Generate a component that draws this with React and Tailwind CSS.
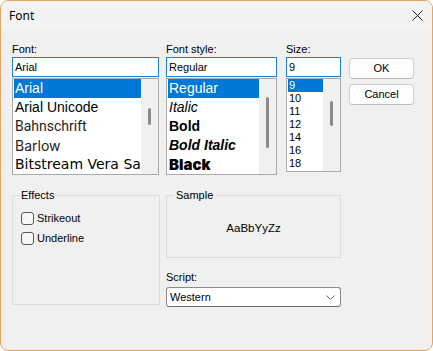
import React from "react";

const fonts = [
  { name: "Arial", cls: "font-['Liberation_Sans',sans-serif]", selected: true },
  { name: "Arial Unicode", cls: "font-['Liberation_Sans',sans-serif]" },
  { name: "Bahnschrift", cls: "font-['Roboto',sans-serif] text-[#222]" },
  { name: "Barlow", cls: "font-['Inter',sans-serif] text-[#222]" },
  { name: "Bitstream Vera Sans", cls: "font-['DejaVu_Sans',sans-serif]" },
];

const styles = [
  { name: "Regular", cls: "", selected: true },
  { name: "Italic", cls: "italic" },
  { name: "Bold", cls: "font-bold" },
  { name: "Bold Italic", cls: "font-bold italic" },
  { name: "Black", cls: "font-['Inter',sans-serif] font-black text-[15px]" },
];

const sizes = ["9", "10", "11", "12", "14", "16", "18"];

function ListBox({ className, thumb, children }) {
  return (
    <div className={`flex border border-[#ababab] bg-white pl-[1px] ${className}`}>
      <div className="flex-1 overflow-hidden">{children}</div>
      <div className="w-[17px] bg-[#f0f0f0] flex justify-center">
        <div className={`w-[3px] rounded-full bg-[#8a8a8a] ${thumb}`} />
      </div>
    </div>
  );
}

function TextBox({ value }) {
  return (
    <div className="h-[20px] border border-[#1e7fd6] bg-white pl-[2px] flex items-center leading-none">
      {value}
    </div>
  );
}

function Label({ children }) {
  return <div className="h-[15px] leading-[15px]">{children}</div>;
}

function CheckRow({ label }) {
  return (
    <div className="flex items-center h-[13px] gap-[3px]">
      <span className="w-[13px] h-[13px] rounded-[3px] border border-[#5a5a5a] bg-[#f6f6f6]" />
      <span className="leading-[13px]">{label}</span>
    </div>
  );
}

export default function App() {
  return (
    <div className="w-[433px] h-[351px] bg-white font-['Liberation_Sans',Arial,sans-serif] text-[11px] text-black">
      <div className="w-full h-full rounded-[8px] border border-[#e3a562] bg-[#f0f0f0] overflow-hidden flex flex-col">
        {/* title bar */}
        <div className="h-[29px] bg-[#f3f3f3] flex items-center justify-between pl-[8px] pr-[9px]">
          <span className="font-['Noto_Sans',sans-serif] text-[12px]">Font</span>
          <svg width="11" height="11" viewBox="0 0 11 11">
            <path d="M0.5 0.5 L10.5 10.5 M10.5 0.5 L0.5 10.5" stroke="#1a1a1a" strokeWidth="1" />
          </svg>
        </div>

        <div className="pl-[11px] pt-[12px]">
          <div className="flex">
            <div className="w-[147px]">
              <Label>Font:</Label>
              <TextBox value="Arial" />
              <ListBox className="mt-[1px] h-[97px]" thumb="mt-[29px] h-[17px]">
                {fonts.map((f) => (
                  <div
                    key={f.name}
                    className={`h-[19px] leading-[19px] pl-[1px] text-[14px] whitespace-nowrap ${f.cls} ${f.selected ? "bg-[#0078d7] text-white" : ""}`}
                  >
                    {f.name}
                  </div>
                ))}
              </ListBox>
            </div>

            <div className="w-[111px] ml-[7px]">
              <Label>Font style:</Label>
              <TextBox value="Regular" />
              <ListBox className="mt-[1px] h-[97px]" thumb="mt-[18px] h-[51px]">
                {styles.map((s) => (
                  <div
                    key={s.name}
                    className={`h-[19px] leading-[19px] pl-[1px] text-[14px] whitespace-nowrap ${s.cls} ${s.selected ? "bg-[#0078d7] text-white" : ""}`}
                  >
                    {s.name}
                  </div>
                ))}
              </ListBox>
            </div>

            <div className="w-[55px] ml-[9px]">
              <Label>Size:</Label>
              <TextBox value="9" />
              <ListBox className="mt-[1px] h-[94px]" thumb="mt-[22px] h-[25px]">
                {sizes.map((s, i) => (
                  <div
                    key={s}
                    className={`h-[13px] leading-[13px] pl-[1px] ${i === 0 ? "bg-[#0078d7] text-white" : ""}`}
                  >
                    {s}
                  </div>
                ))}
              </ListBox>
            </div>

            <div className="w-[65px] ml-[8px] pt-[16px] flex flex-col gap-[5px]">
              <button className="h-[21px] rounded-[4px] border border-[#d0d0d0] border-b-[#bcbcbc] bg-[#fdfdfd]">OK</button>
              <button className="h-[21px] rounded-[4px] border border-[#d0d0d0] border-b-[#bcbcbc] bg-[#fdfdfd]">Cancel</button>
            </div>
          </div>

          <div className="flex mt-[13px]">
            <fieldset className="w-[148px] h-[117px] border border-[#dcdcdc]">
              <legend className="ml-[7px] px-[1px] leading-[14px]">Effects</legend>
              <div className="pl-[8px] pt-[10px] flex flex-col gap-[7px]">
                <CheckRow label="Strikeout" />
                <CheckRow label="Underline" />
              </div>
            </fieldset>

            <div className="w-[175px] ml-[6px] flex flex-col">
              <fieldset className="h-[70px] border border-[#dcdcdc]">
                <legend className="ml-[7px] px-[2px] leading-[14px]">Sample</legend>
                <div className="h-[54px] flex items-center justify-center text-[11.5px]">AaBbYyZz</div>
              </fieldset>
              <div className="mt-[12px]">
                <Label>Script:</Label>
              </div>
              <div className="mt-[2px] h-[20px] flex items-center justify-between pl-[3px] pr-[5px] border border-[#8a8a8a] border-b-[#6a6a6a] rounded-[3px] bg-white">
                <span>Western</span>
                <svg width="9" height="5" viewBox="0 0 9 5">
                  <path d="M0.5 0.5 L4.5 4.5 L8.5 0.5" fill="none" stroke="#606060" strokeWidth="1" />
                </svg>
              </div>
            </div>
          </div>
        </div>
      </div>
    </div>
  );
}
